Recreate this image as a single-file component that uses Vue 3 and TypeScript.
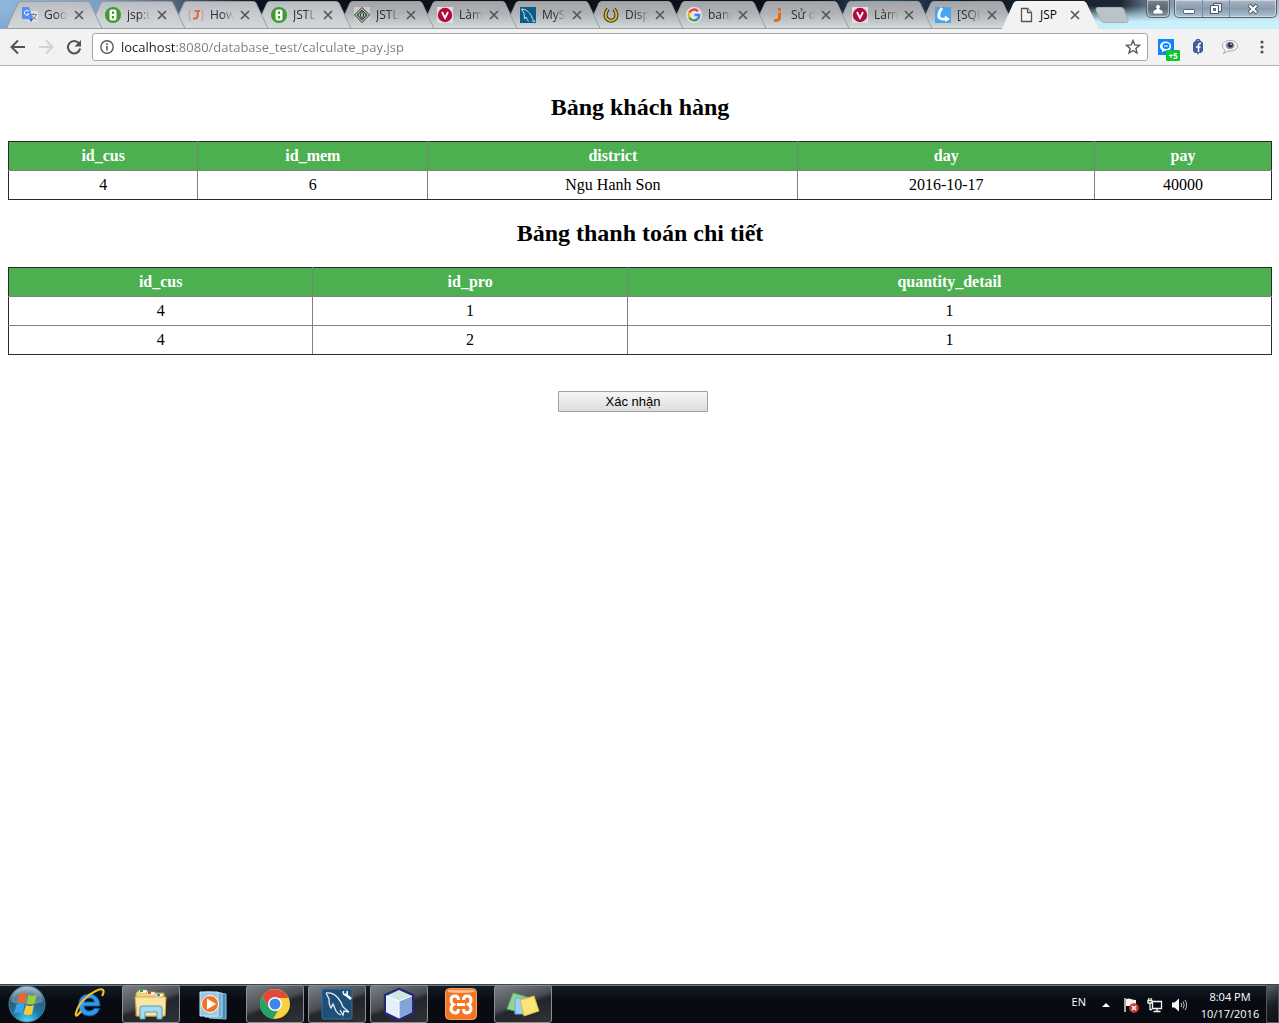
<script setup lang="ts">
interface Tab {
  title: string
  icon: string
  active?: boolean
}

const tabs: Tab[] = [
  { title: 'Goo', icon: 'translate' },
  { title: 'jsp:u', icon: 'green' },
  { title: 'How', icon: 'braces' },
  { title: 'JSTL', icon: 'green' },
  { title: 'JSTL', icon: 'diamond' },
  { title: 'Làm', icon: 'vred' },
  { title: 'MyS', icon: 'mysql' },
  { title: 'Disp', icon: 'horseshoe' },
  { title: 'bang', icon: 'google' },
  { title: 'Sử d', icon: 'joomla' },
  { title: 'Làm', icon: 'vred' },
  { title: '[SQL', icon: 'swoosh' },
  { title: 'JSP', icon: 'page', active: true },
]

const customers = [
  { id_cus: 4, id_mem: 6, district: 'Ngu Hanh Son', day: '2016-10-17', pay: 40000 },
]

const details = [
  { id_cus: 4, id_pro: 1, quantity: 1 },
  { id_cus: 4, id_pro: 2, quantity: 1 },
]

const tasks = [
  { name: 'Internet Explorer', icon: 'ie', open: false },
  { name: 'Windows Explorer', icon: 'explorer', open: true },
  { name: 'Media Player', icon: 'media', open: false },
  { name: 'Chrome', icon: 'chrome', open: true },
  { name: 'MySQL Workbench', icon: 'workbench', open: true },
  { name: 'NetBeans', icon: 'netbeans', open: true },
  { name: 'XAMPP', icon: 'xampp', open: false },
  { name: 'Sticky Notes', icon: 'notes', open: true },
]
</script>

<template>
  <div class="screen">
    <header class="titlebar">
      <div class="tabs">
        <div
          v-for="(tab, i) in tabs"
          :key="i"
          class="tab"
          :class="{ active: tab.active, light: i < 4 }"
          :style="{ zIndex: tab.active ? 30 : 20 - i }"
        >
          <svg class="tab-shape" width="98" height="29" viewBox="0 0 98 29">
            <defs>
              <linearGradient id="tabDark" x1="0" y1="0" x2="0" y2="1">
                <stop offset="0" stop-color="#a3a4a7" />
                <stop offset=".45" stop-color="#b0b3b6" />
                <stop offset="1" stop-color="#d2dbdc" />
              </linearGradient>
              <linearGradient id="tabLight" x1="0" y1="0" x2="0" y2="1">
                <stop offset="0" stop-color="#b9bbbf" />
                <stop offset=".5" stop-color="#c8ccd0" />
                <stop offset="1" stop-color="#d3d8d9" />
              </linearGradient>
            </defs>
            <path
              class="tab-fill"
              d="M.5 28.500 L12 3 Q13 1.500 15 1.500 H81 Q83 1.500 84 3 L96 28.500 Z"
            />
          </svg>
          <svg class="favicon" width="16" height="16" viewBox="0 0 16 16">
            <g v-if="tab.icon === 'translate'">
              <rect x="6" y="4" width="10" height="11" rx="1" fill="#dfe2e5" />
              <path d="M8 7.500h7M11.500 6v1.500M14 7.500c-.5 2.500-2 4-4 5M9.500 8c1 2 2.500 3.500 5 4.500" stroke="#6b8593" fill="none" />
              <path d="M1 0h6l4 12H1a1 1 0 0 1-1-1V1a1 1 0 0 1 1-1z" fill="#5a8df0" />
              <path d="M7 12h4l-2 3z" fill="#3a62c8" />
              <path d="M6.800 4.300A2.400 2.400 0 1 0 7 7H5" stroke="#fff" fill="none" />
            </g>
            <g v-else-if="tab.icon === 'green'">
              <circle cx="8" cy="8" r="8" fill="#3f9b2f" />
              <rect x="4.500" y="2.500" width="7" height="11" rx="2" fill="#fff" />
              <path d="M7 4.500h2v2.500H7zM7 9h2v2.500H7z" fill="#3f9b2f" />
            </g>
            <g v-else-if="tab.icon === 'braces'" fill="none" stroke="#e2694f">
              <path d="M3 2.500Q1.500 2.500 1.500 4v2.500L.5 8l1 1.500V12q0 1.500 1.500 1.500M13 2.500q1.500 0 1.500 1.500v2.500l1 1.500-1 1.500V12q0 1.500-1.500 1.500" stroke-opacity=".6" />
              <path d="M6.500 4H12M10 4l-.5 5.500Q9 12 5 11.500" stroke-width="2.200" />
            </g>
            <g v-else-if="tab.icon === 'diamond'">
              <path d="M0 0h16v16H0z" fill="#c9cccd" />
              <path d="M8 .5L15.500 8 8 15.500.5 8z" fill="#b7bdb9" stroke="#333" />
              <path d="M8 3l5 5-5 5-5-5z" fill="#5c7466" stroke="#34423b" />
              <path d="M5 6.500h6v3H5z" fill="#9fc3ac" />
              <path d="M6.500 6.500v3M9.500 6.500v3" stroke="#34423b" />
            </g>
            <g v-else-if="tab.icon === 'vred'">
              <path d="M0 0h16v16H0z" fill="#dce0e4" />
              <circle cx="8" cy="8" r="7.200" fill="#b30a3b" />
              <path d="M5 5l3 6 3-6" fill="none" stroke="#fff" stroke-width="1.800" />
            </g>
            <g v-else-if="tab.icon === 'mysql'">
              <path d="M0 0h16v16H0z" fill="#0b5c8a" />
              <path d="M1.500 2q5 0 8 4 2.500 3 3 6l2.500 2.500-3-.5M1.500 2l2.500 4 .5 6L6 10l2.500 4.500" fill="none" stroke="#c7dbe6" />
            </g>
            <g v-else-if="tab.icon === 'horseshoe'" fill="none">
              <path d="M5 2Q1 7 3.500 11.500 8 16 12.500 11.500 15 7 11 2" stroke="#3c3514" stroke-width="4" />
              <path d="M5 2Q1 7 3.500 11.500 8 16 12.500 11.500 15 7 11 2" stroke="#cdb443" stroke-width="2" />
            </g>
            <g v-else-if="tab.icon === 'google'" fill="none" stroke-width="2.400">
              <circle cx="8" cy="8" r="8" fill="#e4e6e8" stroke="none" />
              <path d="M12 4.300A5.300 5.300 0 0 0 3.300 5.500" stroke="#e34133" />
              <path d="M3.300 5.500a5.300 5.300 0 0 0 0 5" stroke="#f3b605" />
              <path d="M3.300 10.500A5.300 5.300 0 0 0 11.600 12" stroke="#32a350" />
              <path d="M11.600 12A5.300 5.300 0 0 0 13.300 8H8.500" stroke="#4280ef" />
            </g>
            <g v-else-if="tab.icon === 'joomla'" fill="none" stroke="#e06d13" stroke-width="3">
              <path d="M10.500 5.500v5q0 3-5.500 3" />
              <path d="M9 2.500h3" />
            </g>
            <g v-else-if="tab.icon === 'swoosh'">
              <path d="M0 0h16v16H0z" fill="#4ba5ee" />
              <path d="M7 1Q3 6 4 10.500q2 2.500 7 1" fill="none" stroke="#fff" stroke-width="2.800" />
              <path d="M10 8.500l5 3.500-5 3z" fill="#fff" />
            </g>
            <g v-else fill="#f5f5f5" stroke="#555" stroke-width="1.300">
              <path d="M3.500 1.500h6l4 4v9h-10z" />
              <path d="M9.500 1.500v4h4" />
            </g>
          </svg>
          <span class="tab-title">{{ tab.title }}</span>
          <button class="tab-close" aria-label="Close tab">
            <svg width="10" height="10" viewBox="0 0 10 10">
              <path d="M1 1l8 8M9 1L1 9" stroke="#55585b" stroke-width="1.700" />
            </svg>
          </button>
        </div>
        <button class="new-tab" aria-label="New tab">
          <svg width="34" height="17" viewBox="0 0 34 17">
            <path d="M3 .5h23q2 0 3 2l4 11q.5 2-1.500 2H9q-2 0-3-2L1 3Q.5.500 3 .500z" fill="#b9c3c8" stroke="#a3afb6" />
          </svg>
        </button>
      </div>
      <div class="window-controls">
        <button class="win user" aria-label="Profile">
          <svg width="12" height="12" viewBox="0 0 12 12">
            <path d="M6 1.500a2.300 2.300 0 0 1 1.300 4.200L11 8v3H1V8l3.700-2.300A2.300 2.300 0 0 1 6 1.500z" fill="#fff" stroke="#55616c" stroke-width=".7" />
          </svg>
        </button>
        <div class="win-group">
          <button class="win" aria-label="Minimize">
            <svg width="14" height="12" viewBox="0 0 14 12">
              <rect x="1.500" y="6.500" width="11" height="4" rx="1" fill="#fff" stroke="#535f70" />
            </svg>
          </button>
          <button class="win" aria-label="Restore">
            <svg width="14" height="13" viewBox="0 0 14 13">
              <path d="M4.500 1.500h8v8h-8z" fill="#eef3f8" stroke="#4b5768" />
              <path d="M1.500 3.500h8v8h-8z" fill="#fff" stroke="#4b5768" />
              <path d="M4.500 6.500h2v2h-2z" fill="#8298ad" stroke="#4b5768" />
            </svg>
          </button>
          <button class="win wide" aria-label="Close">
            <svg width="14" height="12" viewBox="0 0 14 12">
              <path d="M3 2l8 8M11 2l-8 8" stroke="#4b5768" stroke-width="4" />
              <path d="M3.500 2.500l7 7M10.500 2.500l-7 7" stroke="#fff" stroke-width="2.200" />
            </svg>
          </button>
        </div>
      </div>
    </header>

    <nav class="toolbar">
      <button class="tool" aria-label="Back">
        <svg width="16" height="16" viewBox="0 0 16 16">
          <path d="M15 8H2M8 1.500L1.500 8 8 14.500" fill="none" stroke="#505254" stroke-width="2" />
        </svg>
      </button>
      <button class="tool" aria-label="Forward">
        <svg width="16" height="16" viewBox="0 0 16 16">
          <path d="M1 8h13M8 1.500L14.500 8 8 14.500" fill="none" stroke="#d2d2d2" stroke-width="2" />
        </svg>
      </button>
      <button class="tool" aria-label="Reload">
        <svg width="16" height="16" viewBox="0 0 16 16">
          <path d="M13 4.300A6.200 6.200 0 1 0 14.200 9.500" fill="none" stroke="#505254" stroke-width="2" />
          <path d="M15 1v6.500H8.500z" fill="#505254" />
        </svg>
      </button>
      <div class="omnibox">
        <svg width="14" height="14" viewBox="0 0 14 14">
          <circle cx="7" cy="7" r="6.200" fill="none" stroke="#55585b" stroke-width="1.400" />
          <path d="M7 6v4.500M7 3.300v1.600" stroke="#55585b" stroke-width="1.600" />
        </svg>
        <input
          class="url"
          type="text"
          aria-label="Address"
          value="localhost:8080/database_test/calculate_pay.jsp"
        />
        <button class="star" aria-label="Bookmark">
          <svg width="16" height="16" viewBox="0 0 16 16">
            <path d="M8 1.500l1.800 4.400 4.700.4-3.600 3.100 1.100 4.600L8 11.500 4 14l1.100-4.600L1.500 6.300l4.700-.4z" fill="none" stroke="#55585b" stroke-width="1.400" />
          </svg>
        </button>
      </div>
      <button class="ext" aria-label="Messages">
        <svg width="16" height="16" viewBox="0 0 16 16">
          <path d="M0 0h16v16H0z" fill="#0a84ff" />
          <path d="M8 2.500a5.300 4.800 0 1 1-2 9.300L4 13.500V11A5.300 4.800 0 0 1 8 2.500z" fill="#fff" />
          <ellipse cx="8" cy="7" rx="3.500" ry="3" fill="#0a84ff" />
          <path d="M6 7h4" stroke="#fff" />
        </svg>
        <span class="badge">+5</span>
      </button>
      <button class="ext" aria-label="Facebook tool">
        <svg width="12" height="16" viewBox="0 0 12 16">
          <path d="M4 2q2-3 4 0" fill="none" stroke="#3a5590" stroke-width="1.500" />
          <path d="M3 2h6l2 2v8L9 14H7l-1 2-1-2H3l-2-2V4z" fill="#3f5c9e" />
          <path d="M9 4.500Q6.500 4 6.500 6.500V13M4 8h4.500" fill="none" stroke="#fff" stroke-width="1.600" />
        </svg>
      </button>
      <button class="ext" aria-label="Chat">
        <svg width="16" height="16" viewBox="0 0 16 16">
          <path d="M8 1.500c4 0 7.500 2 7.500 5.300S12 12 8 12H6l-4.500 2.500L3 11Q.5 9.500.5 6.800C.5 3.500 4 1.500 8 1.500z" fill="#fafafa" stroke="#aaa" />
          <ellipse cx="8" cy="6.500" rx="4.500" ry="3.800" fill="#a3969a" />
          <circle cx="8.300" cy="6" r="2.600" fill="#262f52" />
          <circle cx="9" cy="5.300" r=".8" fill="#fff" />
        </svg>
      </button>
      <button class="ext menu" aria-label="Menu">
        <svg width="4" height="14" viewBox="0 0 4 14" fill="#505254">
          <circle cx="2" cy="2" r="1.600" />
          <circle cx="2" cy="7" r="1.600" />
          <circle cx="2" cy="12" r="1.600" />
        </svg>
      </button>
    </nav>

    <main class="page">
      <h2>Bảng khách hàng</h2>
      <table>
        <colgroup>
          <col class="c15" /><col class="c18" /><col class="c29" /><col class="c24" /><col />
        </colgroup>
        <thead>
          <tr>
            <th>id_cus</th>
            <th>id_mem</th>
            <th>district</th>
            <th>day</th>
            <th>pay</th>
          </tr>
        </thead>
        <tbody>
          <tr v-for="row in customers" :key="row.id_cus">
            <td>{{ row.id_cus }}</td>
            <td>{{ row.id_mem }}</td>
            <td>{{ row.district }}</td>
            <td>{{ row.day }}</td>
            <td>{{ row.pay }}</td>
          </tr>
        </tbody>
      </table>

      <h2>Bảng thanh toán chi tiết</h2>
      <table>
        <colgroup>
          <col class="c24b" /><col class="c25" /><col />
        </colgroup>
        <thead>
          <tr>
            <th>id_cus</th>
            <th>id_pro</th>
            <th>quantity_detail</th>
          </tr>
        </thead>
        <tbody>
          <tr v-for="row in details" :key="row.id_pro">
            <td>{{ row.id_cus }}</td>
            <td>{{ row.id_pro }}</td>
            <td>{{ row.quantity }}</td>
          </tr>
        </tbody>
      </table>

      <form class="actions" @submit.prevent>
        <button class="confirm" type="submit">Xác nhận</button>
      </form>
    </main>

    <footer class="taskbar">
      <button class="start" aria-label="Start">
        <svg width="38" height="38" viewBox="0 0 38 38">
          <defs>
            <radialGradient id="orb" cx=".5" cy="1" r="1">
              <stop offset="0" stop-color="#4fe0f5" />
              <stop offset=".4" stop-color="#1c79ad" />
              <stop offset=".75" stop-color="#2b5877" />
              <stop offset="1" stop-color="#9db9c8" />
            </radialGradient>
          </defs>
          <circle cx="19" cy="19" r="18" fill="url(#orb)" stroke="#4f8199" />
          <path d="M3 17a16 15 0 0 1 32 0q-16 5-32 0z" fill="#fff" opacity=".25" />
          <path d="M11 10q4-3 8-1l-2 9q-4-2-8 0z" fill="#f0652a" />
          <path d="M20.500 9.500q4 2.500 8.500 0l-2.500 9q-4 2-8 0z" fill="#9ccb3b" />
          <path d="M8.500 19.500q4-2 8 0l-2 9q-4-2-8.500 0z" fill="#3fa5ea" />
          <path d="M18 20q4 2 8 0l-2 9q-4 2-8.500 0z" fill="#fdc92e" />
        </svg>
      </button>
      <div class="tasks">
        <button v-for="t in tasks" :key="t.name" class="task" :class="{ open: t.open }" :aria-label="t.name">
          <svg width="34" height="34" viewBox="0 0 34 34">
            <g v-if="t.icon === 'ie'">
              <path d="M28 19H12q.5 5 5.500 5 3 0 4.500-2.500h5.500Q25 29 17 29 7 28 6.500 18 7 7.500 17 7q10.500.5 11 12zM12 15h10.500q-.5-4-5-4T12 15z" fill="#2f9be8" stroke="#0d5cab" />
              <path d="M9 24q-6 8-5 2Q6 17 16 9q12-9 15-6 1.500 2-1 6" fill="none" stroke="#f6bd2b" stroke-width="2.200" />
            </g>
            <g v-else-if="t.icon === 'explorer'">
              <path d="M2 6l2-2h9l1 2h16v23H2z" fill="#f1d57c" stroke="#c59b3b" />
              <path d="M5 3h8v3H5zM13 5h8v3h-8zM21 7h8v3h-8z" fill="#fff" stroke="#c9b36a" stroke-width=".6" />
              <path d="M6 3h3v2H6z" fill="#24a33c" /><path d="M14 5h3v2h-3z" fill="#e04727" /><path d="M23 7h3v2h-3z" fill="#2e8be0" />
              <path d="M1 10h31l-1 19H3z" fill="#f8e6a2" stroke="#d3ac4c" />
              <path d="M6 32V21q0-2 2-2h18q2 0 2 2v11h-5v-7H11v7z" fill="#a6d9f2" stroke="#4f9dc6" />
            </g>
            <g v-else-if="t.icon === 'media'">
              <path d="M13 5l17 2v25l-17-1z" fill="#4b8cb4" stroke="#91c4df" />
              <path d="M9 5l17 1v24H9z" fill="#73acd0" stroke="#b5dcef" />
              <path d="M4 5h18v24H4z" fill="#99c6e1" stroke="#d3eaf5" />
              <circle cx="14" cy="17" r="8.500" fill="#f17421" stroke="#fff" />
              <path d="M11 11.500l9 5.500-9 5.500z" fill="#fff" />
            </g>
            <g v-else-if="t.icon === 'chrome'">
              <circle cx="17" cy="17" r="15" fill="#fbd03f" />
              <path d="M4 9.500A15 15 0 0 1 30.500 11H17l-6 9.500z" fill="#df4a3c" />
              <path d="M4 9.500l7 11q3 4 9 3L15 32A15 15 0 0 1 4 9.500z" fill="#23a366" />
              <circle cx="17" cy="17" r="7" fill="#fff" />
              <circle cx="17" cy="17" r="5.500" fill="#4284ee" />
            </g>
            <g v-else-if="t.icon === 'workbench'">
              <rect x="2" y="2" width="30" height="30" rx="2" fill="#1d4f79" stroke="#3b7198" />
              <path d="M6 6q7-1 12 5 4 5 5 9l6 5-5-1-1 4-3-5M6 6l3 6q0 6 2 9l2-4 3 7q2 3 5 4" fill="none" stroke="#e4edf4" stroke-width="1.300" />
              <path d="M25 7l6 5" stroke="#fff" stroke-width="2.500" />
              <path d="M23.500 4q-1 4 2.500 4 2-1.500 1-4" fill="none" stroke="#fff" stroke-width="1.500" />
            </g>
            <g v-else-if="t.icon === 'netbeans'">
              <path d="M17 2l14 6v18l-14 7-14-7V8z" fill="#b6cdea" stroke="#252778" stroke-width="2.500" />
              <path d="M17 3l13 6-13 5L4 9z" fill="#cfe8e4" />
              <path d="M4 9l13 5v17L4 25z" fill="#e5effa" />
              <path d="M30 9l-13 5v17l13-6z" fill="#82a4d6" />
              <path d="M4 9l13 5 13-5M17 14v17" fill="none" stroke="#fff" />
            </g>
            <g v-else-if="t.icon === 'xampp'">
              <rect x="1.500" y="1.500" width="31" height="31" rx="4" fill="#f37722" stroke="#f7a064" />
              <path d="M4 3h26q1 1 0 2-13 2-26 0z" fill="#fff" opacity=".5" />
              <path d="M14.500 13q0-4-3.500-4-4 0-4 4 0 3 2.500 4.500Q7 19 7 22t4 4q3.500 0 3.500-4M19.500 13q0-4 3.500-4 4 0 4 4 0 3-2.500 4.500Q27 19 27 22t-4 4q-3.500 0-3.500-4M13 17.500h8" fill="none" stroke="#fff" stroke-width="3" />
            </g>
            <g v-else>
              <path d="M7 6l14 4-5 16L1 22z" fill="#8fd58a" stroke="#5ba858" />
              <path d="M9 11h15v16H9z" fill="#9cd0f7" stroke="#69a8db" />
              <path d="M14 13l14-4 5 15-15 5z" fill="#fbe478" stroke="#d7b63c" />
            </g>
          </svg>
        </button>
      </div>
      <div class="tray">
        <span class="lang">EN</span>
        <svg width="8" height="4" viewBox="0 0 8 4"><path d="M0 4l4-4 4 4z" fill="#fff" /></svg>
        <svg class="flag" width="16" height="16" viewBox="0 0 16 16">
          <path d="M2 1v14" stroke="#ddd" stroke-width="1.500" />
          <path d="M3 2q3-1 5 0t5 1v6H3z" fill="#f5f5f5" />
          <circle cx="11" cy="11" r="4.800" fill="#d8362c" />
          <path d="M9 9l4 4M13 9l-4 4" stroke="#fff" stroke-width="1.600" />
        </svg>
        <svg width="16" height="16" viewBox="0 0 16 16" fill="none" stroke="#f3f3f3" stroke-width="1.300">
          <path d="M5.500 4.500h9v7h-9zM10 12v2M6.500 14.500h7M1 3.500h4v2.500H1zM3 6v6.500h2M1.800 1v2M4.200 1v2" />
        </svg>
        <svg width="16" height="16" viewBox="0 0 16 16" fill="none">
          <path d="M1 5.500h2.500L8 1.500v13l-4.500-4H1z" fill="#f5f5f5" />
          <path d="M10 6q1.500 2 0 4M12 4.500q2.500 3.500 0 7M14 3q3.500 5 0 10" stroke="#c5c5c5" />
        </svg>
        <div class="clock">
          <span>8:04 PM</span>
          <span>10/17/2016</span>
        </div>
        <button class="show-desktop" aria-label="Show desktop"></button>
      </div>
    </footer>
  </div>
</template>

<style>
body {
  margin: 0;
}
</style>

<style scoped>
.screen {
  display: flex;
  flex-direction: column;
  min-height: 100vh;
  background: #fff;
  color: #000;
  font-family: "Liberation Serif", serif;
}
button {
  padding: 0;
  border: 0;
  background: none;
  font: inherit;
}
svg {
  display: block;
  flex: none;
}

/* Title bar */
.titlebar {
  display: flex;
  justify-content: space-between;
  height: 29px;
  overflow: hidden;
  background:
    linear-gradient(180deg, transparent 20%, rgba(205, 245, 255, 0.95) 75%) right / 190px 100% no-repeat,
    linear-gradient(180deg, transparent 30%, rgba(120, 160, 200, 0.6)),
    linear-gradient(90deg, #8db6dc 0, #7d9fc4 100px, #4c5f78 180px, #0b121c 260px, #0b121c 820px, #2f5170 880px, #111b28 960px, #1a2633 1120px, #8296a8 1160px, #9fb4c6 100%);
}
.tabs {
  display: flex;
  padding-left: 6px;
}
.tab {
  position: relative;
  display: flex;
  align-items: center;
  flex: 0 0 83px;
  box-sizing: border-box;
  height: 29px;
  padding-left: 16px;
  font: 12px/16px "Open Sans", sans-serif;
  color: #2b2d30;
}
.tab-shape {
  position: absolute;
  left: 0;
  top: 0;
}
.tab-fill {
  fill: url(#tabDark);
  stroke: #989da0;
}
.light .tab-fill {
  fill: url(#tabLight);
}
.active .tab-fill {
  fill: #f2f2f2;
  stroke: #f2f2f2;
}
.favicon {
  position: relative;
}
.tab-title {
  position: relative;
  width: 24px;
  margin-left: 6px;
  white-space: nowrap;
  mask-image: linear-gradient(90deg, #000 50%, transparent);
}
.active .tab-title {
  mask-image: none;
  color: #000;
}
.tab-close {
  position: relative;
  margin-left: 6px;
}
.new-tab {
  margin: 7px 0 0 10px;
  align-self: flex-start;
}
.window-controls {
  display: flex;
  gap: 4px;
  padding-right: 2px;
  height: 18px;
}
.win {
  display: flex;
  align-items: center;
  justify-content: center;
  width: 27px;
  height: 17px;
}
.win + .win {
  border-left: 1px solid #7c8c9c;
}
.win.wide {
  width: 47px;
}
.win-group,
.win.user {
  box-sizing: border-box;
  height: 18px;
  border: 1px solid #566472;
  border-top: 0;
  border-radius: 0 0 5px 5px;
  background: linear-gradient(180deg, #a7b5c4, #8c9cae 50%, #a9c2d4);
  box-shadow: inset 0 0 1px 1px rgba(255, 255, 255, 0.5);
}
.win.user {
  width: 24px;
  background: linear-gradient(180deg, #77828e, #5c6874 50%, #8ea3b1);
}
.win-group {
  display: flex;
}

/* Toolbar */
.toolbar {
  display: flex;
  align-items: center;
  box-sizing: border-box;
  height: 37px;
  padding: 0 10px;
  border-bottom: 1px solid #b6b6b6;
  background: #f2f2f2;
}
.tool {
  margin-right: 12px;
}
.tool:nth-child(3) {
  margin-right: 10px;
}
.omnibox {
  display: flex;
  align-items: center;
  flex: 1;
  box-sizing: border-box;
  height: 28px;
  padding: 0 6px 0 7px;
  border: 1px solid #a6a6a6;
  border-radius: 3px;
  background: #fff;
}
.url {
  flex: 1;
  min-width: 0;
  margin: 0 0 0 7px;
  padding: 0;
  border: 0;
  outline: 0;
  font: 13px/20px "Open Sans", sans-serif;
  color: transparent;
  background: linear-gradient(90deg, #1f1f1f 55px, #7d7d7d 55px);
  background-clip: text;
}
.ext {
  position: relative;
  display: flex;
  justify-content: center;
  width: 16px;
  margin-left: 16px;
}
.omnibox + .ext {
  margin-left: 10px;
}
.ext.menu {
  width: 4px;
  margin: 0 5px 0 22px;
}
.badge {
  position: absolute;
  left: 8px;
  top: 11px;
  width: 14px;
  border-radius: 1px;
  background: #0ac630;
  color: #fff;
  font: bold 8px/11px "Open Sans", sans-serif;
  text-align: center;
}

/* Page */
.page {
  flex: 1;
  padding: 28px 7px 0 8px;
}
h2 {
  margin: 0 0 20px;
  font-size: 24px;
  line-height: 27px;
  font-weight: bold;
  text-align: center;
}
table {
  width: 100%;
  margin-bottom: 20px;
  border-collapse: collapse;
  table-layout: fixed;
  border: 1px solid #2a2a2a;
  font-size: 16px;
  line-height: 18px;
  text-align: center;
}
th,
td {
  padding: 5px;
  border: 1px solid #808080;
}
thead th {
  border-top-color: #2a2a2a;
  background: #4caf50;
  color: #fff;
}
tr > :first-child {
  border-left-color: #2a2a2a;
}
tr > :last-child {
  border-right-color: #2a2a2a;
}
tbody tr:last-child td {
  border-bottom-color: #2a2a2a;
}
.c15 {
  width: 15%;
}
.c18 {
  width: 18.2%;
}
.c29 {
  width: 29.3%;
}
.c24 {
  width: 23.5%;
}
.c24b {
  width: 24.1%;
}
.c25 {
  width: 24.9%;
}
.actions {
  display: flex;
  justify-content: center;
  padding: 16px 14px 0 0;
}
.confirm {
  box-sizing: border-box;
  width: 150px;
  height: 21px;
  border: 1px solid #a0a0a0;
  border-radius: 1px;
  background: linear-gradient(180deg, #f6f6f6, #dddddd);
  font: 13px/18px "Liberation Sans", sans-serif;
  color: #000;
}

/* Taskbar */
.taskbar {
  display: flex;
  align-items: center;
  height: 39px;
  border-top: 1px solid #3c4650;
  box-shadow: inset 0 1px 0 #6d7985;
  background: linear-gradient(180deg, #141d26, #080c12 40%, #070b11);
  box-sizing: border-box;
}
.start {
  margin-left: 8px;
}
.tasks {
  display: flex;
  gap: 4px;
  margin-left: 14px;
}
.task {
  display: flex;
  align-items: center;
  justify-content: center;
  box-sizing: border-box;
  width: 58px;
  height: 38px;
}
.task.open {
  border: 1px solid #8b9095;
  border-radius: 3px;
  background: linear-gradient(160deg, #7c8084, #4a4e52 45%, #22262a 55%, #2f3337);
}
.tray {
  display: flex;
  align-items: center;
  height: 100%;
  margin-left: auto;
  gap: 8px;
  color: #fff;
  font: 11px/17px "Open Sans", sans-serif;
}
.lang {
  margin: 0 8px 6px 0;
}
.tray > svg {
  margin-top: 2px;
}
.tray > .flag {
  margin-left: 5px;
}
.clock {
  display: flex;
  flex-direction: column;
  width: 70px;
  padding-top: 2px;
  text-align: center;
}
.show-desktop {
  width: 13px;
  height: 38px;
  margin-left: -7px;
  border: 1px solid #4d5660;
  background: linear-gradient(150deg, #59616a, #1b2026 50%, #0c1015);
}
</style>
